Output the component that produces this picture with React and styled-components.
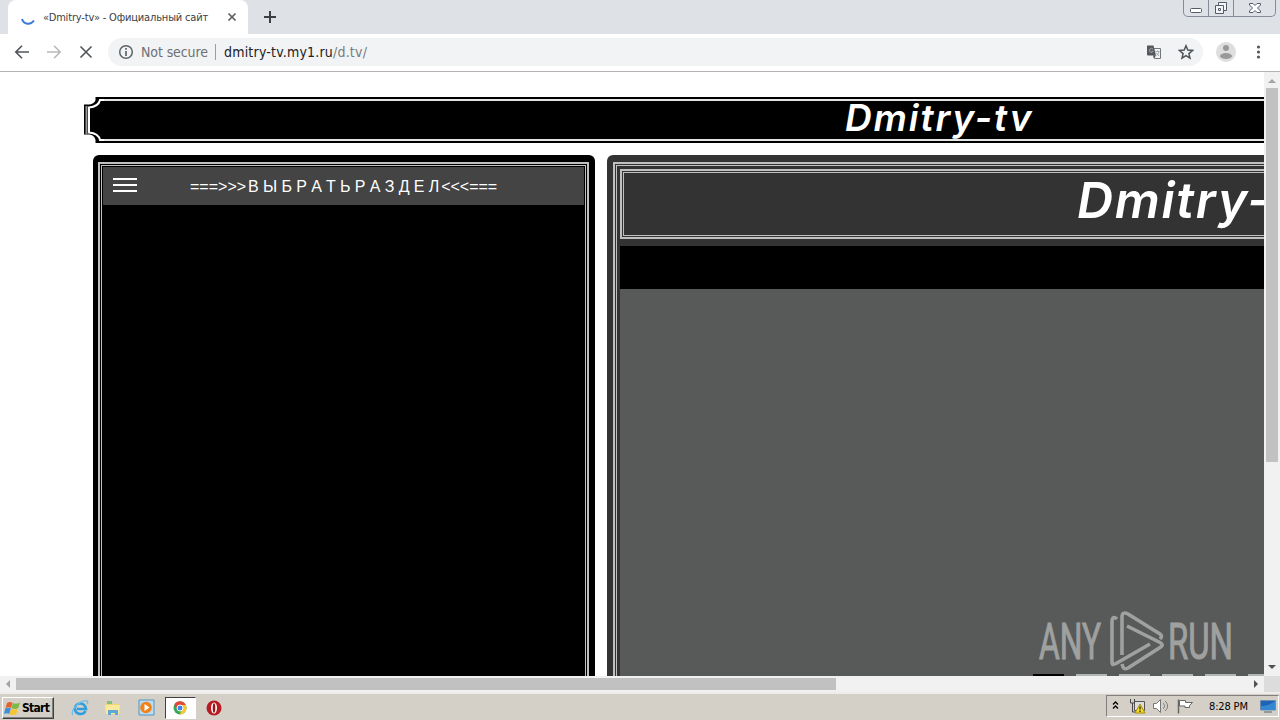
import React from "react";
import styled, { createGlobalStyle } from "styled-components";

const GlobalStyle = createGlobalStyle`
  * {
    box-sizing: border-box;
  }

  body {
    margin: 0;
    overflow: hidden;
    background: #fff;
    font-family: "DejaVu Sans Condensed", "DejaVu Sans", sans-serif;
  }
`;

const Desktop = styled.div`
  width: 1280px;
  height: 720px;
  display: flex;
  flex-direction: column;
  position: relative;
  overflow: hidden;
  white-space: nowrap;
`;

/* ---------- browser ---------- */

const TabStrip = styled.div`
  height: 34px;
  flex: none;
  display: flex;
  justify-content: space-between;
  padding-left: 8px;
  background: #dee1e6;
`;

const TabGroup = styled.div`
  display: flex;
  align-items: center;
  gap: 14px;
`;

const Tab = styled.div`
  width: 240px;
  height: 34px;
  display: flex;
  align-items: center;
  padding: 0 8px 0 12px;
  background: #fff;
  border-radius: 8px 8px 0 0;
`;

const TabTitle = styled.span`
  width: 181px;
  margin-left: 7px;
  font-family: "DejaVu Sans Condensed", sans-serif;
  font-stretch: condensed;
  font-size: 11px;
  letter-spacing: -0.17px;
  color: #3c4043;
`;

const WindowButtons = styled.div`
  width: 93px;
  height: 17px;
  margin-right: 4px;
  display: flex;
  border: 1px solid #858b98;
  border-top: 0;
  border-radius: 0 0 5px 5px;
`;

const WindowButton = styled.div`
  width: ${(props) => props.$width}px;
  display: flex;
  justify-content: center;
  border-left: ${(props) => (props.$first ? "0" : "1px solid #858b98")};
`;

const Toolbar = styled.div`
  height: 38px;
  flex: none;
  display: flex;
  align-items: center;
  padding: 0 12px 1px 14px;
  background: #fff;
  border-bottom: 1px solid #b6b4b6;
`;

const NavIcons = styled.div`
  width: 94px;
  display: flex;
  gap: 16px;
`;

const AddressBar = styled.div`
  width: 1095px;
  height: 28px;
  display: flex;
  align-items: center;
  padding: 0 9px 0 10px;
  border-radius: 14px;
  background: #f1f3f4;
  font-size: 14px;
  color: #202124;
`;

const Security = styled.span`
  width: 67px;
  margin-left: 7px;
  font-family: "DejaVu Sans Condensed", sans-serif;
  font-stretch: condensed;
  letter-spacing: -0.1px;
  color: #6d7175;
`;

const Divider = styled.span`
  width: 1px;
  height: 16px;
  margin: 0 8px 0 7px;
  background: #9a9da1;
`;

const Url = styled.span`
  flex: 1;
  font-stretch: condensed;
  letter-spacing: 0.2px;

  span {
    color: #777b80;
  }
`;

const AddressIcons = styled.div`
  display: flex;
  align-items: center;
  gap: 16px;
`;

const Profile = styled.div`
  margin-left: 13px;
  display: flex;
  align-items: center;
  gap: 16px;
`;

const Viewport = styled.div`
  height: 620px;
  flex: none;
  display: grid;
  grid-template: 604px 16px / 1264px 16px;
`;

const Scrollbar = styled.div`
  display: flex;
  flex-direction: ${(props) => (props.$vertical ? "column" : "row")};
  background: #f1f1f1;
`;

const ScrollArrow = styled.svg`
  width: 16px;
  height: 16px;
  flex: none;
`;

const ScrollThumb = styled.div`
  width: ${(props) => (props.$vertical ? "12px" : "820px")};
  height: ${(props) => (props.$vertical ? "374px" : "12px")};
  margin: ${(props) => (props.$vertical ? "0 2px auto" : "2px auto 2px 0")};
  background: #c1c1c1;
`;

const ScrollCorner = styled.div`
  background: #dcdcdc;
`;

/* ---------- page ---------- */

const Page = styled.main`
  padding: 25px 0 0 84px;
  overflow: hidden;
  background: #fff;
`;

const Banner = styled.header`
  height: 46px;
  display: flex;
`;

const BannerCap = styled.svg`
  width: 20px;
  height: 46px;
  flex: none;
`;

const BannerBody = styled.div`
  flex: 1;
  border: solid #000;
  border-width: 2px 0;
  background: #000;
`;

const BannerInner = styled.div`
  height: 42px;
  padding-left: 741px;
  border-top: 2px solid #e4e6e6;
  border-bottom: 2px solid #e4e6e6;
`;

const Title = styled.h1`
  margin: 0;
  font-family: Inter, sans-serif;
  font-style: italic;
  font-weight: 600;
  font-size: ${(props) => props.$size}px;
  line-height: ${(props) => props.$line}px;
  letter-spacing: ${(props) => props.$spacing}px;
  color: #fff;
`;

const Columns = styled.div`
  height: 521px;
  display: flex;
  gap: 12px;
  margin: 12px 0 0 9px;
`;

const SidePanel = styled.nav`
  width: 502px;
  flex: none;
  padding: 7px 6px 0 5px;
  border-radius: 6px 6px 0 0;
  background: #000;
`;

const MainPanel = styled.section`
  width: 900px;
  flex: none;
  padding: 7px 0 0 6px;
  border-radius: 6px 0 0 0;
  background: #333;
`;

const OuterLine = styled.div`
  height: 100%;
  padding: 1px 1px 0;
  border: 2px solid #c0c0c0;
  border-bottom: 0;
`;

const InnerLine = styled.div`
  height: 100%;
  padding: ${(props) => props.$pad};
  border: 1px solid #c0c0c0;
  border-bottom: 0;
`;

const MenuBar = styled.div`
  height: 38px;
  display: flex;
  align-items: center;
  gap: 53px;
  padding-left: 10px;
  background: #444;
  color: #fff;
  font: 16px "Liberation Sans", Arial, sans-serif;
`;

const MenuLabel = styled.span`
  padding-top: 2px;

  b {
    font-weight: normal;
    margin: 0 2px;
    letter-spacing: -0.09px;
  }
`;

const Burger = styled.div`
  width: 24px;
  height: 14px;
  margin-bottom: 2px;
  display: flex;
  flex-direction: column;
  justify-content: space-between;

  i {
    height: 2px;
    background: #fff;
  }
`;

const TitleFrame = styled.div`
  height: 70px;
  padding: 1px;
  border: 2px solid #c0c0c0;
`;

const TitleFrameInner = styled.div`
  height: 64px;
  padding-left: 453px;
  border: 1px solid #c0c0c0;
`;

const BlackStrip = styled.div`
  height: 43px;
  margin-top: 7px;
  background: #000;
`;

const Content = styled.div`
  height: 387px;
  display: flex;
  align-items: flex-end;
  gap: 12px;
  padding-left: 413px;
  background: #585a59;
`;

const Thumb = styled.div`
  width: 31px;
  height: 2px;
  flex: none;
  background: ${(props) => (props.$active ? "#000" : "#b4b5b5")};
`;

/* ---------- taskbar ---------- */

const Taskbar = styled.footer`
  height: 28px;
  flex: none;
  display: flex;
  justify-content: space-between;
  padding: 1px 1px 0 2px;
  border-top: 2px solid #efede9;
  background: #d4d0c8;
`;

const TaskGroup = styled.div`
  display: flex;
  align-items: center;
`;

const StartButton = styled.div`
  width: 52px;
  height: 22px;
  margin-right: 9px;
  display: flex;
  align-items: center;
  gap: 1px;
  padding-left: 1px;
  border: 1px solid;
  border-color: #fff #404040 #404040 #fff;
  box-shadow: inset -1px -1px #808080;
  font: bold 12px "DejaVu Sans Condensed", sans-serif;
  font-stretch: condensed;
  letter-spacing: -0.7px;
`;

const TaskButton = styled.div`
  width: ${(props) => (props.$active ? 31 : 33.5)}px;
  height: 22px;
  display: flex;
  align-items: center;
  justify-content: center;
  ${(props) =>
    props.$active &&
    `
    margin: 0 2px 0 1px;
    background: #fff;
    border: 1px solid;
    border-color: #404040 #fff #fff #404040;
  `}
`;

const Tray = styled.div`
  width: 173px;
  height: 22px;
  display: flex;
  align-items: center;
  padding: 0 0 0 4px;
  border: 1px solid;
  border-color: #808080 #fff #fff #808080;
  font-size: 11px;
  font-stretch: condensed;
`;

const TrayIcon = styled.svg`
  width: ${(props) => props.$width}px;
  height: 16px;
  flex: none;
  margin-right: ${(props) => props.$gap}px;
`;

const Clock = styled.span`
  width: 51px;
  padding-top: 1px;
  letter-spacing: -0.15px;
`;

const Watermark = styled.svg`
  position: absolute;
  left: 1034px;
  top: 606px;
`;

const Arrow = ({ d, color }) => (
  <ScrollArrow viewBox="0 0 16 16">
    <path d={d} fill={color} />
  </ScrollArrow>
);

const ToolIcon = ({ children, color = "#505458" }) => (
  <svg
    width="16"
    height="16"
    viewBox="0 0 16 16"
    fill="none"
    stroke={color}
    strokeWidth="1.6"
  >
    {children}
  </svg>
);

const Browser = () => (
  <>
    <TabStrip>
      <TabGroup>
        <Tab>
          <svg width="16" height="16" viewBox="0 0 16 16">
            <path
              d="M2 10C3.500 15.500 10.500 16.500 14 11.500"
              fill="none"
              stroke="#3b7bd9"
              strokeWidth="2"
            />
          </svg>
          <TabTitle>«Dmitry-tv» - Официальный сайт</TabTitle>
          <svg width="16" height="16" viewBox="0 0 16 16">
            <path d="M4.500 4.500l7 7M11.500 4.500l-7 7" stroke="#5c5e62" strokeWidth="1.700" />
          </svg>
        </Tab>
        <svg width="16" height="16" viewBox="0 0 16 16">
          <path d="M8 2v12M2 8h12" stroke="#3c4043" strokeWidth="2" />
        </svg>
      </TabGroup>
      <WindowButtons>
        <WindowButton $width={24} $first>
          <svg width="14" height="16" fill="#fff" stroke="#555b69">
            <rect x="1.500" y="8.500" width="11" height="4" rx="1" />
          </svg>
        </WindowButton>
        <WindowButton $width={25}>
          <svg width="14" height="16" fill="#f4f5f7" stroke="#555b69">
            <path d="M4.500 2.500h8v8h-8z" />
            <path d="M1.500 5.500h8v8h-8z" />
            <path d="M4.500 8.500h2v2h-2z" />
          </svg>
        </WindowButton>
        <WindowButton $width={42}>
          <svg width="14" height="16" fill="#fff" stroke="#555b69">
            <path d="M1.500 3.500h3.500l2 2 2-2h3.500v1.500l-3 3 3 3v1.500H9l-2-2-2 2H1.500V11l3-3-3-3z" />
          </svg>
        </WindowButton>
      </WindowButtons>
    </TabStrip>
    <Toolbar>
      <NavIcons>
        <ToolIcon>
          <path d="M15 8H2M8 1.700L1.800 8 8 14.300" />
        </ToolIcon>
        <ToolIcon color="#b7b9bb">
          <path d="M1 8h13M8 1.700L14.200 8 8 14.300" />
        </ToolIcon>
        <ToolIcon>
          <path d="M2.500 2.500l11 11M13.500 2.500l-11 11" />
        </ToolIcon>
      </NavIcons>
      <AddressBar>
        <svg width="16" height="16" viewBox="0 0 16 16">
          <circle cx="8" cy="8" r="6.300" fill="none" stroke="#5f6368" strokeWidth="1.500" />
          <path d="M8 4v1.800M8 7v5" stroke="#5f6368" strokeWidth="1.700" />
        </svg>
        <Security>Not secure</Security>
        <Divider />
        <Url>
          dmitry-tv.my1.ru<span>/d.tv/</span>
        </Url>
        <AddressIcons>
          <svg width="16" height="16" viewBox="0 0 16 16">
            <path d="M6.500 4.500h8v10h-6z" fill="#f1f3f4" stroke="#74777b" />
            <path d="M1 1.500h6.500l2.500 10H2a1 1 0 01-1-1z" fill="#54585c" />
            <path
              d="M7 5.200a2 2 0 10.200 2H5.500M9.500 7.500h4M11.500 6.500v1M13 7.500c-.5 2-1.500 3-2.500 4M10.500 9l2.500 3"
              fill="none"
              stroke="#a5a8ab"
            />
            <path d="M7 11.500h3l-2 3z" fill="#54585c" />
          </svg>
          <svg width="16" height="16" viewBox="0 0 16 16">
            <path
              d="M8 1.800l1.800 4.300 4.700.4-3.600 3.100 1.100 4.600L8 11.700l-4 2.500 1.100-4.600L1.500 6.500l4.700-.4z"
              fill="none"
              stroke="#505458"
              strokeWidth="1.500"
            />
          </svg>
        </AddressIcons>
      </AddressBar>
      <Profile>
        <svg width="20" height="20" viewBox="0 0 20 20">
          <circle cx="10" cy="10" r="10" fill="#dedede" />
          <circle cx="10" cy="6" r="3" fill="#999" />
          <ellipse cx="10" cy="14" rx="6" ry="3" fill="#999" />
        </svg>
        <svg width="16" height="16" fill="#54585c">
          <circle cx="6.500" cy="3" r="1.600" />
          <circle cx="6.500" cy="8" r="1.600" />
          <circle cx="6.500" cy="13" r="1.600" />
        </svg>
      </Profile>
    </Toolbar>
  </>
);

const Site = () => (
  <Page>
    <Banner>
      <BannerCap viewBox="0 0 20 46">
        <path d="M20 0H11.500v3C11 5.500 8 7.500 4 7.500H0v30h4c4 0 7 2 7.500 5.500v3H20z" fill="#000" />
        <path
          d="M20 3H16C15 7.500 10.500 10 5 10.500v25C10.500 36 15 38.500 16 43H20"
          fill="none"
          stroke="#fff"
          strokeWidth="2"
        />
        <path d="M2.500 9v28" stroke="#999" strokeWidth="2" />
      </BannerCap>
      <BannerBody>
        <BannerInner>
          <Title $size={37} $line={34} $spacing={1.9}>
            Dmitry-tv
          </Title>
        </BannerInner>
      </BannerBody>
    </Banner>
    <Columns>
      <SidePanel>
        <OuterLine>
          <InnerLine $pad="1px 1px 0">
            <MenuBar>
              <Burger>
                <i />
                <i />
                <i />
              </Burger>
              <MenuLabel>
                ===&gt;&gt;&gt;<b>В Ы Б Р А Т Ь Р А З Д Е Л</b>&lt;&lt;&lt;===
              </MenuLabel>
            </MenuBar>
          </InnerLine>
        </OuterLine>
      </SidePanel>
      <MainPanel>
        <OuterLine>
          <InnerLine $pad="3px 0 0 3px">
            <TitleFrame>
              <TitleFrameInner>
                <Title $size={50} $line={54} $spacing={1.7}>
                  Dmitry-tv
                </Title>
              </TitleFrameInner>
            </TitleFrame>
            <BlackStrip />
            <Content>
              <Thumb $active />
              <Thumb />
              <Thumb />
              <Thumb />
              <Thumb />
              <Thumb />
            </Content>
          </InnerLine>
        </OuterLine>
      </MainPanel>
    </Columns>
  </Page>
);

const StartMenuBar = () => (
  <Taskbar>
    <TaskGroup>
      <StartButton>
        <svg width="17" height="16" viewBox="0 0 17 16">
          <path d="M3 3c2-1.500 4-1.200 5.500-.2L7 8C5.500 7 3.500 7 1.500 8z" fill="#e8602c" />
          <path d="M9 3c2 1 4 1 7-.5L14.300 8c-2 1.200-4 1.200-7 .2z" fill="#7cba45" />
          <path d="M1.300 8.500c2-1 4-1 5.500 0l-1.500 5.500C3.800 13 2 13 0 14z" fill="#3d8fdc" />
          <path d="M7.200 8.700c2 1 4 1 6.600-.2l-1.500 5.500c-2 1.200-4.200 1.200-6.600.2z" fill="#f7c52e" />
        </svg>
        Start
      </StartButton>
      <TaskButton>
        <svg width="18" height="18" viewBox="0 0 18 18" fill="none">
          <path d="M14.500 12c-2.500 5-10.500 3.500-10.500-2.500s9.500-7.500 11 .5H6" stroke="#2e9ee0" strokeWidth="2.600" />
          <path d="M2 16C-1 12 8 1 16 2c1 .2 1 2 0 3" stroke="#71bdec" strokeWidth="1.300" />
        </svg>
      </TaskButton>
      <TaskButton>
        <svg width="18" height="18" viewBox="0 0 18 18">
          <path d="M2 4h6l1 1h6v8H2z" fill="#ecd675" />
          <path d="M3 2h5v3H3z" fill="#83be83" />
          <path d="M1 6h15l-1 9H2z" fill="#f8e99b" />
          <path d="M4 16v-5h10v5h-3v-2H7v2z" fill="#5fa7d7" />
        </svg>
      </TaskButton>
      <TaskButton>
        <svg width="17" height="17" viewBox="0 0 17 17">
          <path d="M1 1h15v15H1z" fill="#b9dcf3" stroke="#5595c4" />
          <circle cx="8" cy="8.500" r="5.800" fill="#f08218" />
          <path d="M6.500 5l5 3.500-5 3.500z" fill="#fff" />
        </svg>
      </TaskButton>
      <TaskButton $active>
        <svg width="14" height="14" viewBox="0 0 14 14">
          <circle cx="7" cy="7" r="6.500" fill="#36a852" />
          <path d="M1.300 3.500A6.500 6.500 0 0112.800 4H7L4.500 8.500z" fill="#df4936" />
          <path d="M12.800 4A6.500 6.500 0 016.500 13.500L9.500 8 8 4z" fill="#f7c92f" />
          <circle cx="7" cy="7" r="3" fill="#4285e8" stroke="#fff" />
        </svg>
      </TaskButton>
      <TaskButton>
        <svg width="16" height="16" viewBox="0 0 16 16">
          <circle cx="8" cy="8" r="7.500" fill="#b51d20" />
          <ellipse cx="8" cy="8" rx="3" ry="5.500" fill="#fff" />
          <ellipse cx="8" cy="8" rx="1.300" ry="4.700" fill="#97161a" />
        </svg>
      </TaskButton>
    </TaskGroup>
    <Tray>
      <TrayIcon $width={9} $gap={9} fill="none" stroke="#000" strokeWidth="1.300">
        <path d="M2 6.500l2.500-2.500L7 6.500M2 10.500L4.500 8 7 10.500" />
      </TrayIcon>
      <TrayIcon $width={17} $gap={7}>
        <path d="M5.500 3.500h10v9h-10z" fill="#ddd" stroke="#555" />
        <path d="M1.500 1v4h4V1M3.500 5v9h6" fill="none" stroke="#444" />
        <path d="M11 6l5 9H6z" fill="#f6dc20" stroke="#a78c10" />
        <path d="M11 8.500v3M11 12.500v1.500" stroke="#222" strokeWidth="1.300" />
      </TrayIcon>
      <TrayIcon $width={17} $gap={7}>
        <path d="M.5 5.500h3l4-4v13l-4-4h-3z" fill="#fff" stroke="#777" />
        <path d="M10 5c2 2 2 4 0 6M12 3c3.500 3 3.500 7 0 10" fill="none" stroke="#777" />
      </TrayIcon>
      <TrayIcon $width={17} $gap={15}>
        <path d="M1.500 1.500v14" stroke="#666" strokeWidth="1.500" />
        <path d="M2.500 2.500h6v2h7l-3 3 0 2H8v-1.500H2.500z" fill="#fff" stroke="#666" />
      </TrayIcon>
      <Clock>8:28 PM</Clock>
      <TrayIcon $width={16} $gap={0}>
        <path d="M.5 2.500h15V12H.5z" fill="#1d63b8" stroke="#6c8dab" />
        <path d="M1 8C7 8 11 6 15 3v9H1z" fill="#3487d0" />
        <path d="M4 14h8" stroke="#567" />
      </TrayIcon>
    </Tray>
  </Taskbar>
);

const AnyRun = () => (
  <Watermark width="230" height="70" opacity="0.65">
    <g
      fill="#c6c7c7"
      stroke="#c6c7c7"
      strokeWidth="1"
      fontFamily="Liberation Sans Narrow, Roboto, sans-serif"
      fontSize="50"
    >
      <text x="5" y="53" textLength="62" lengthAdjust="spacingAndGlyphs">
        ANY
      </text>
      <text x="134" y="53" textLength="65" lengthAdjust="spacingAndGlyphs">
        RUN
      </text>
    </g>
    <g fill="none" stroke="#c6c7c7" strokeWidth="3.600" strokeLinejoin="round">
      <path d="M83 13C79 9.500 78 13 78 16v40c0 3 1 3 4 1.500l34-19.500" />
      <path d="M88 49V11c0-4 2-5 6-3l32 20c2 1.500 2 3 0 5" />
      <path d="M93 20l33 16.500c3 2 3 3 0 5L94 62c-4 2-5 0-6-4" />
    </g>
  </Watermark>
);

const App = () => {
  return (
    <Desktop>
      <GlobalStyle />
      <Browser />
      <Viewport>
        <Site />
        <Scrollbar $vertical>
          <Arrow d="M4 11l4-4 4 4z" color="#a3a3a3" />
          <ScrollThumb $vertical />
          <Arrow d="M4 5l4 4 4-4z" color="#505050" />
        </Scrollbar>
        <Scrollbar>
          <Arrow d="M10 4v8L6 8z" color="#a3a3a3" />
          <ScrollThumb />
          <Arrow d="M6 4v8l4-4z" color="#505050" />
        </Scrollbar>
        <ScrollCorner />
      </Viewport>
      <StartMenuBar />
      <AnyRun />
    </Desktop>
  );
};

export default App;
